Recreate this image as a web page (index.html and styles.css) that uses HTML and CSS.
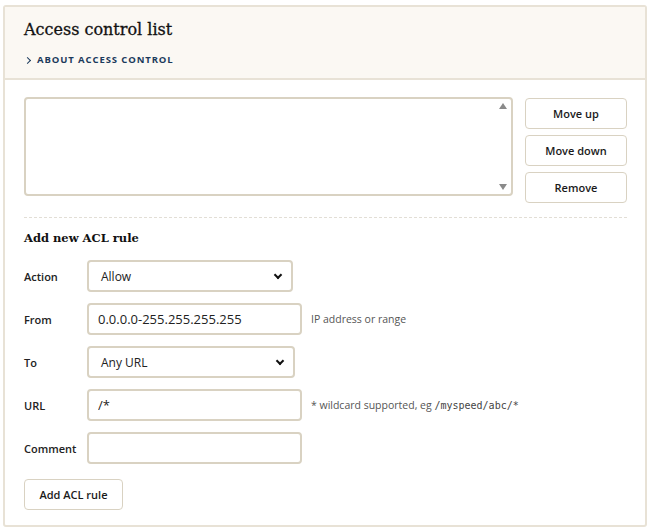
FILE: index.html
```html
<!DOCTYPE html>
<html lang="en">
<head>
  <meta charset="UTF-8" />
  <title>Access control list</title>
  <link rel="stylesheet" href="styles.css">
</head>
<body>
  <div class="card">
    <div class="card-header">
      <h2 class="title">Access control list</h2>
      <a class="about-link" href="#"><span class="chev"></span>ABOUT ACCESS CONTROL</a>
    </div>

    <div class="card-body">
      <div class="list-row">
        <div class="rule-list">
          <div class="scroll">
            <span class="arrow up"></span>
            <span class="arrow down"></span>
          </div>
        </div>
        <div class="list-actions">
          <button class="btn">Move up</button>
          <button class="btn">Move down</button>
          <button class="btn">Remove</button>
        </div>
      </div>

      <h3 class="subtitle">Add new ACL rule</h3>

      <div class="form-row">
        <label>Action</label>
        <div class="select sel-action">Allow<span class="caret"></span></div>
      </div>
      <div class="form-row">
        <label>From</label>
        <input class="text-input" type="text" value="0.0.0.0-255.255.255.255">
        <span class="hint">IP address or range</span>
      </div>
      <div class="form-row">
        <label>To</label>
        <div class="select sel-to">Any URL<span class="caret"></span></div>
      </div>
      <div class="form-row">
        <label>URL</label>
        <input class="text-input" type="text" value="/*">
        <span class="hint">* wildcard supported, eg <code>/myspeed/abc/*</code></span>
      </div>
      <div class="form-row">
        <label>Comment</label>
        <input class="text-input" type="text" value="">
      </div>

      <button class="btn btn-add">Add ACL rule</button>
    </div>
  </div>
</body>
</html>
```

FILE: styles.css
```css
:root {
  --border: #e8e2d6;
  --field-border: #d9d2c2;
  --header-bg: #fbf8f3;
  --text: #222;
  --navy: #1b3a5c;
}

* {
  box-sizing: border-box;
}

body {
  margin: 0;
  padding: 5px 3px 2px 3px;
  background: #fff;
  color: var(--text);
  font-family: "Open Sans", "Noto Sans", Arial, sans-serif;
  font-size: 12px;
}

.card {
  border: 2px solid var(--border);
  border-radius: 3px;
  background: #fff;
}

.card-header {
  background: var(--header-bg);
  border-bottom: 2px solid var(--border);
  padding: 12px 19px 11px 19px;
}

.title {
  font-family: "DejaVu Serif", Georgia, serif;
  font-weight: normal;
  font-size: 16px;
  line-height: 22px;
  margin: 0 0 12px 0;
  color: #111;
  -webkit-text-stroke: 0.3px #111;
}

.about-link {
  display: flex;
  align-items: center;
  line-height: 14px;
  color: var(--navy);
  text-decoration: none;
  font-weight: bold;
  font-size: 9.5px;
  letter-spacing: 0.9px;
}

.chev {
  width: 5px;
  height: 5px;
  border-right: 1.5px solid var(--navy);
  border-top: 1.5px solid var(--navy);
  transform: rotate(45deg);
  margin: 0 7px 0 1px;
}

.card-body {
  padding: 17px 18px 15px 19px;
}

.list-row {
  display: flex;
  align-items: flex-start;
  gap: 12px;
  padding-bottom: 14px;
  border-bottom: 1px dashed #e2ded6;
}

.rule-list {
  flex: 1;
  height: 99px;
  border: 2px solid var(--field-border);
  border-radius: 4px;
  display: flex;
  justify-content: flex-end;
}

.scroll {
  width: 14px;
  position: relative;
}

.arrow {
  position: absolute;
  left: 2px;
  width: 0;
  height: 0;
  border-left: 4px solid transparent;
  border-right: 4px solid transparent;
}

.arrow.up {
  top: 4px;
  border-bottom: 6px solid #8a8a8a;
}

.arrow.down {
  bottom: 4px;
  border-top: 6px solid #8a8a8a;
}

.list-actions {
  width: 102px;
  margin-top: 1px;
  display: flex;
  flex-direction: column;
  gap: 6px;
}

.btn {
  background: #fff;
  border: 1px solid var(--field-border);
  border-radius: 4px;
  font-family: "Open Sans", "Noto Sans", Arial, sans-serif;
  font-size: 11px;
  font-weight: 600;
  color: #1a1a1a;
  height: 31px;
  padding: 0 10px;
  white-space: nowrap;
  cursor: pointer;
}

.subtitle {
  font-family: "DejaVu Serif", Georgia, serif;
  font-size: 11.5px;
  line-height: 16px;
  margin: 12px 0 14px 0;
  color: #111;
}

.form-row {
  display: flex;
  align-items: center;
  height: 32px;
  margin-bottom: 11px;
}

.form-row label {
  width: 63px;
  font-weight: 600;
  font-size: 11px;
}

.text-input {
  width: 215px;
  height: 32px;
  border: 2px solid var(--field-border);
  border-radius: 4px;
  padding: 0 9px;
  font-family: "Open Sans", "Noto Sans", Arial, sans-serif;
  font-size: 13px;
  color: #222;
  outline: none;
}

.select {
  height: 32px;
  border: 2px solid var(--field-border);
  border-radius: 4px;
  padding: 0 10px 0 12px;
  display: flex;
  align-items: center;
  justify-content: space-between;
  font-size: 12px;
  color: #222;
}

.sel-action {
  width: 206px;
}

.sel-to {
  width: 208px;
}

.caret {
  width: 6px;
  height: 6px;
  border-right: 2px solid #111;
  border-bottom: 2px solid #111;
  transform: rotate(45deg);
  margin-top: -3px;
}

.hint {
  margin-left: 9px;
  font-size: 10.5px;
  color: #555;
}

.hint code {
  font-family: "DejaVu Sans Mono", "Liberation Mono", monospace;
  font-size: 10px;
  color: #444;
}

.btn-add {
  margin-top: 4px;
  width: 99px;
}
```
